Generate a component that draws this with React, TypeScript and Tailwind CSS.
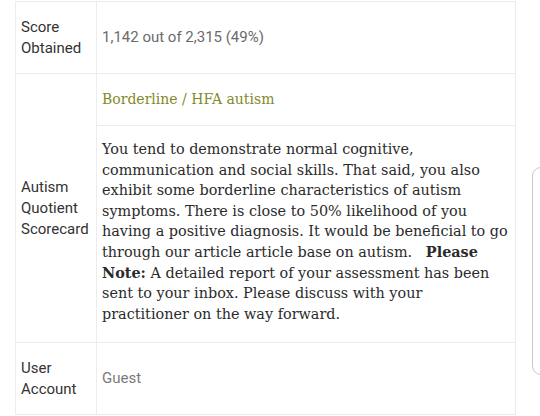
import React from 'react'

const sans = { fontFamily: 'Roboto, "Liberation Sans", sans-serif' }
const serif = { fontFamily: '"DejaVu Serif", "Liberation Serif", serif' }

export default function App() {
  return (
    <div className="relative w-[540px] h-[416px] overflow-hidden bg-white">
      {/* Result table */}
      <div className="ml-[15px] mt-px w-[501px] border border-[#ececec] border-b-0">
        {/* Score */}
        <div className="flex h-[72px] border-b border-[#ececec]">
          <div
            className="w-[81px] shrink-0 border-r border-[#ececec] px-[5px] text-[15px] leading-[21px] text-[#333] flex items-center"
            style={sans}
          >
            Score Obtained
          </div>
          <div
            className="flex-1 px-[5px] flex items-center text-[15px] text-[#6b6b6b]"
            style={sans}
          >
            1,142 out of 2,315 (49%)
          </div>
        </div>

        {/* Scorecard */}
        <div className="flex border-b border-[#ececec]">
          <div
            className="w-[81px] shrink-0 border-r border-[#ececec] px-[5px] text-[15px] leading-[21px] text-[#333] flex items-center"
            style={sans}
          >
            Autism Quotient Scorecard
          </div>
          <div className="flex-1 flex flex-col">
            <div
              className="h-[52px] border-b border-[#ececec] px-[5px] flex items-center text-[14px] text-[#7f8a2b]"
              style={serif}
            >
              Borderline / HFA autism
            </div>
            <div
              className="h-[216px] px-[5px] pt-[13px] text-[14.4px] leading-[20.6px] text-[#2b2b2b] whitespace-nowrap"
              style={serif}
            >
              You tend to demonstrate normal cognitive,
              <br />
              communication and social skills. That said, you also
              <br />
              exhibit some borderline characteristics of autism
              <br />
              symptoms. There is close to 50% likelihood of you
              <br />
              having a positive diagnosis. It would be beneficial to go
              <br />
              through our article article base on autism.&nbsp;&nbsp; <b>Please</b>
              <br />
              <b>Note:</b> A detailed report of your assessment has been
              <br />
              sent to your inbox. Please discuss with your
              <br />
              practitioner on the way forward.
            </div>
          </div>
        </div>

        {/* User */}
        <div className="flex h-[72px] border-b border-[#ececec]">
          <div
            className="w-[81px] shrink-0 border-r border-[#ececec] px-[5px] text-[15px] leading-[21px] text-[#333] flex items-center"
            style={sans}
          >
            User Account
          </div>
          <div
            className="flex-1 px-[5px] flex items-center text-[15px] text-[#7a7a7a]"
            style={sans}
          >
            Guest
          </div>
        </div>
      </div>

      {/* floating panel edge */}
      <div className="absolute left-[532px] top-[167px] w-[40px] h-[208px] rounded-[9px] border border-[#c8c8c8] bg-white" />
    </div>
  )
}
